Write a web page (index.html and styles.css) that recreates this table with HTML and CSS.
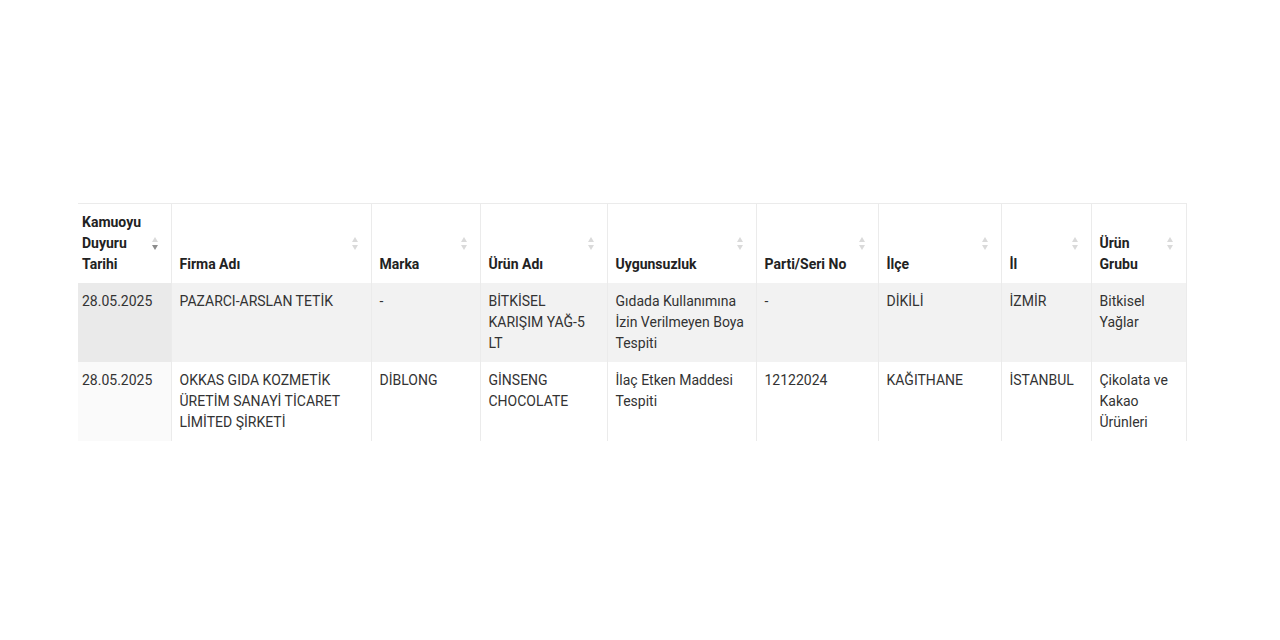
FILE: index.html
```html
<!DOCTYPE html>
<html lang="tr">
<head>
<meta charset="utf-8">
<title>Kamuoyu Duyuruları</title>
<link rel="stylesheet" href="styles.css">
</head>
<body>
<div class="page">
  <table class="grid">
    <colgroup>
      <col class="c1"><col class="c2"><col class="c3"><col class="c4"><col class="c5"><col class="c6"><col class="c7"><col class="c8"><col class="c9">
    </colgroup>
    <thead>
      <tr>
        <th class="sorted">Kamuoyu Duyuru Tarihi<span class="sort desc"><svg viewBox="0 0 6 13" width="6" height="13"><path class="up" d="M3 0 L6 5 L0 5 Z"/><path class="down" d="M0 8 L6 8 L3 13 Z"/></svg></span></th>
        <th>Firma Adı<span class="sort"><svg viewBox="0 0 6 13" width="6" height="13"><path class="up" d="M3 0 L6 5 L0 5 Z"/><path class="down" d="M0 8 L6 8 L3 13 Z"/></svg></span></th>
        <th>Marka<span class="sort"><svg viewBox="0 0 6 13" width="6" height="13"><path class="up" d="M3 0 L6 5 L0 5 Z"/><path class="down" d="M0 8 L6 8 L3 13 Z"/></svg></span></th>
        <th>Ürün Adı<span class="sort"><svg viewBox="0 0 6 13" width="6" height="13"><path class="up" d="M3 0 L6 5 L0 5 Z"/><path class="down" d="M0 8 L6 8 L3 13 Z"/></svg></span></th>
        <th>Uygunsuzluk<span class="sort"><svg viewBox="0 0 6 13" width="6" height="13"><path class="up" d="M3 0 L6 5 L0 5 Z"/><path class="down" d="M0 8 L6 8 L3 13 Z"/></svg></span></th>
        <th>Parti/Seri No<span class="sort"><svg viewBox="0 0 6 13" width="6" height="13"><path class="up" d="M3 0 L6 5 L0 5 Z"/><path class="down" d="M0 8 L6 8 L3 13 Z"/></svg></span></th>
        <th>İlçe<span class="sort"><svg viewBox="0 0 6 13" width="6" height="13"><path class="up" d="M3 0 L6 5 L0 5 Z"/><path class="down" d="M0 8 L6 8 L3 13 Z"/></svg></span></th>
        <th>İl<span class="sort"><svg viewBox="0 0 6 13" width="6" height="13"><path class="up" d="M3 0 L6 5 L0 5 Z"/><path class="down" d="M0 8 L6 8 L3 13 Z"/></svg></span></th>
        <th>Ürün Grubu<span class="sort"><svg viewBox="0 0 6 13" width="6" height="13"><path class="up" d="M3 0 L6 5 L0 5 Z"/><path class="down" d="M0 8 L6 8 L3 13 Z"/></svg></span></th>
      </tr>
    </thead>
    <tbody>
      <tr class="odd">
        <td class="sorted">28.05.2025</td>
        <td>PAZARCI-ARSLAN TETİK</td>
        <td>-</td>
        <td>BİTKİSEL KARIŞIM YAĞ-5 LT</td>
        <td>Gıdada Kullanımına İzin Verilmeyen Boya Tespiti</td>
        <td>-</td>
        <td>DİKİLİ</td>
        <td>İZMİR</td>
        <td>Bitkisel Yağlar</td>
      </tr>
      <tr class="even">
        <td class="sorted">28.05.2025</td>
        <td>OKKAS GIDA KOZMETİK ÜRETİM SANAYİ TİCARET LİMİTED ŞİRKETİ</td>
        <td>DİBLONG</td>
        <td>GİNSENG CHOCOLATE</td>
        <td>İlaç Etken Maddesi Tespiti</td>
        <td>12122024</td>
        <td>KAĞITHANE</td>
        <td>İSTANBUL</td>
        <td>Çikolata ve Kakao Ürünleri</td>
      </tr>
    </tbody>
  </table>
</div>
</body>
</html>
```

FILE: styles.css
```css
html, body {
  margin: 0;
  padding: 0;
  background: #ffffff;
}

body {
  font-family: Roboto, "Liberation Sans", Arial, sans-serif;
  font-size: 14px;
  line-height: 21px;
  color: #333333;
}

.page {
  padding: 203px 0 0 78px;
  height: 640px;
  box-sizing: border-box;
}

.grid {
  border-collapse: collapse;
  table-layout: fixed;
  width: 1108px;
}

.c1 { width: 93px; }
.c2 { width: 200px; }
.c3 { width: 109px; }
.c4 { width: 127px; }
.c5 { width: 149px; }
.c6 { width: 122px; }
.c7 { width: 123px; }
.c8 { width: 90px; }
.c9 { width: 95px; }

.grid th,
.grid td {
  text-align: left;
  border-left: 1px solid #ebebeb;
}

.grid td {
  padding: 8px 8px 8px 8px;
  vertical-align: top;
  font-weight: 400;
}

.grid th {
  position: relative;
  padding: 8px 22px 8px 8px;
  vertical-align: bottom;
  font-weight: 700;
  color: #222222;
  border-top: 1px solid #ebebeb;
}

.grid th:first-child,
.grid td:first-child {
  border-left: none;
  padding-left: 4px;
}

.grid th:last-child,
.grid td:last-child {
  border-right: 1px solid #ebebeb;
}

.sort {
  position: absolute;
  right: 13px;
  top: 50%;
  margin-top: -7px;
  display: block;
  width: 6px;
  height: 13px;
}

.sort svg {
  display: block;
}

.sort .up,
.sort .down {
  fill: #dadada;
}

.sort.desc .down {
  fill: #8c8c8c;
}

.odd td {
  background: #f2f2f2;
}

.odd td.sorted {
  background: #eaeaea;
}

.even td {
  background: #ffffff;
}

.even td.sorted {
  background: #fafafa;
}
```
